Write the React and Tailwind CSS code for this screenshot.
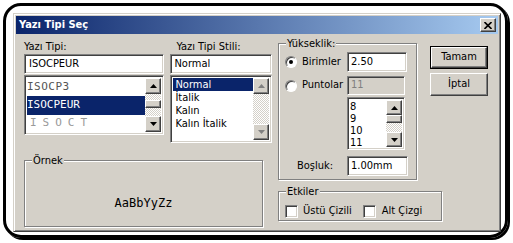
// Classic Windows "Yazı Tipi Seç" dialog

const sunken =
	'border border-t-[#808080] border-l-[#808080] border-b-white border-r-white shadow-[inset_1px_1px_0_#404040,inset_-1px_-1px_0_#d4d0c8]';
const raised =
	'border border-t-white border-l-white border-b-[#404040] border-r-[#404040] shadow-[inset_-1px_-1px_0_#808080]';
const checker =
	'bg-[repeating-conic-gradient(#d4d0c8_0_25%,#ffffff_0_50%)] bg-[length:2px_2px]';

const Arrow = ({ up, disabled }) => (
	<svg width="7" height="4" viewBox="0 0 7 4">
		<path
			d={up ? 'M3.5 0 L7 4 L0 4 Z' : 'M0 0 L7 0 L3.5 4 Z'}
			fill={disabled ? '#808080' : '#000'}
		/>
	</svg>
);

const ScrollButton = ({ up, disabled, h = 16 }) => (
	<div
		className={`w-[16px] bg-[#d4d0c8] flex items-center justify-center ${raised}`}
		style={{ height: h }}
	>
		<Arrow up={up} disabled={disabled} />
	</div>
);

const ScrollBar = ({ thumbTop = 0, disabled, btn = 16 }) => (
	<div className="w-[16px] h-full flex flex-col shrink-0">
		<ScrollButton up disabled={disabled} h={btn} />
		<div className={`flex-1 flex flex-col ${checker}`}>
			{!disabled && (
				<>
					<div style={{ height: thumbTop }} />
					<div className={`h-[8px] w-[16px] bg-[#d4d0c8] ${raised}`} />
				</>
			)}
		</div>
		<ScrollButton disabled={disabled} h={btn} />
	</div>
);

const Group = ({ label, className, children }) => (
	<div
		className={`relative border border-[#808080] shadow-[inset_1px_1px_0_#fff,1px_1px_0_#fff] ${className}`}
	>
		<span className="absolute -top-[7px] left-[7px] px-[1px] bg-[#d4d0c8] leading-[13px]">
			{label}
		</span>
		{children}
	</div>
);

const Radio = ({ checked }) => (
	<div
		className={`w-[12px] h-[12px] rounded-full bg-white flex items-center justify-center border border-t-[#808080] border-l-[#808080] border-b-white border-r-white shadow-[inset_1px_1px_0_#404040]`}
	>
		{checked && <div className="w-[4px] h-[4px] rounded-full bg-black" />}
	</div>
);

const Checkbox = () => <div className={`w-[13px] h-[13px] bg-white ${sunken}`} />;

const Input = ({ value, className, disabled }) => (
	<div
		className={`${sunken} ${disabled ? 'bg-[#d4d0c8] text-[#808080]' : 'bg-white'} flex items-center pl-[3px] ${className}`}
	>
		{value}
	</div>
);

export default function App() {
	return (
		<div className="w-[513px] h-[243px] bg-white overflow-hidden font-['DejaVu_Sans_Condensed','DejaVu_Sans',sans-serif] text-[11px] text-black">
			<div className="ml-[3px] mt-[3px] w-[505px] h-[235px] border-[3px] border-black rounded-[18px] shadow-[2px_2px_0_#000] pt-[7px] pl-[7px]">
				{/* window */}
				<div className="w-[488px] h-[219px] bg-[#d4d0c8] border border-t-[#d4d0c8] border-l-[#d4d0c8] border-b-[#404040] border-r-[#404040] shadow-[inset_1px_1px_0_#fff,inset_-1px_-1px_0_#808080] p-[2px]">
					{/* title bar */}
					<div className="h-[18px] flex items-center justify-between pl-[3px] pr-[2px] bg-[linear-gradient(to_right,#0a246a,#a6caf0)]">
						<span className="font-bold text-white">Yazı Tipi Seç</span>
						<div className={`w-[16px] h-[14px] bg-[#d4d0c8] flex items-center justify-center ${raised}`}>
							<svg width="8" height="7" viewBox="0 0 8 7">
								<path d="M0.5 0 L7.5 7 M7.5 0 L0.5 7" stroke="#000" strokeWidth="1.6" />
							</svg>
						</div>
					</div>

					{/* body */}
					<div className="flex pl-[8px] pt-[6px]">
						{/* left section */}
						<div className="w-[248px] flex flex-col">
							<div className="flex gap-[6px]">
								{/* font */}
								<div className="w-[141px] flex flex-col">
									<div className="h-[14px] leading-[14px]">Yazı Tipi:</div>
									<Input value="ISOCPEUR" className="h-[20px] pl-[4px]" />
									<div className={`mt-[1px] h-[60px] bg-white flex p-[2px] ${sunken}`}>
										<div className="flex-1 flex flex-col font-['DejaVu_Sans_Mono',monospace]">
											<div className="h-[19px] flex items-center text-[#555] font-light text-[11px] tracking-[0.5px]">
												ISOCP3
											</div>
											<div className="h-[19px] flex items-center bg-[#0a246a] text-white text-[11px]">
												ISOCPEUR
											</div>
											<div className="h-[18px] flex items-center pl-[3px] text-[#999] font-light text-[11px] tracking-[6px]">
												ISOCT
											</div>
										</div>
										<ScrollBar thumbTop={6} />
									</div>
								</div>

								{/* style */}
								<div className="w-[102px] flex flex-col">
									<div className="h-[14px] leading-[14px] pl-[6px]">Yazı Tipi Stili:</div>
									<Input value="Normal" className="h-[20px]" />
									<div className={`mt-[1px] h-[68px] bg-white flex p-[2px] ${sunken}`}>
										<div className="flex-1 flex flex-col">
											<div className="h-[13px] leading-[13px] pl-[2px] bg-[#0a246a] text-white">Normal</div>
											<div className="h-[13px] leading-[13px] pl-[2px]">İtalik</div>
											<div className="h-[13px] leading-[13px] pl-[2px]">Kalın</div>
											<div className="h-[13px] leading-[13px] pl-[2px]">Kalın İtalik</div>
										</div>
										<ScrollBar disabled />
									</div>
								</div>
							</div>

							<Group label="Örnek" className="mt-[17px] w-[239px] h-[67px]">
								<div className="flex justify-center pt-[36px] font-['DejaVu_Sans_Mono',monospace] text-[12px] leading-[13px]">
									AaBbYyZz
								</div>
							</Group>
						</div>

						{/* right section */}
						<div className="ml-[6px] flex flex-col">
							<div className="flex">
								<Group label="Yükseklik:" className="mt-[3px] w-[139px] h-[137px] pt-[8px]">
									<div className="flex items-center">
										<div className="w-[68px] pl-[6px] flex items-center gap-[5px]">
											<Radio checked />
											<span>Birimler</span>
										</div>
										<Input value="2.50" className="w-[60px] h-[20px]" />
									</div>
									<div className="flex items-center mt-[4px]">
										<div className="w-[68px] pl-[6px] flex items-center gap-[5px]">
											<Radio />
											<span>Puntolar</span>
										</div>
										<Input value="11" disabled className="w-[58px] h-[19px]" />
									</div>
									<div className="flex mt-[2px]">
										<div className="w-[68px]" />
										<div className={`w-[58px] h-[53px] bg-white flex p-[2px] ${sunken}`}>
											<div className="flex-1 flex flex-col">
												<div className="h-[12px] leading-[12px] pt-[1px]">8</div>
												<div className="h-[12px] leading-[12px] pt-[1px]">9</div>
												<div className="h-[12px] leading-[12px] pt-[1px]">10</div>
												<div className="h-[12px] leading-[12px] pt-[1px]">11</div>
											</div>
											<ScrollBar thumbTop={0} btn={15} />
										</div>
									</div>
									<div className="flex items-center mt-[6px]">
										<div className="w-[68px] pl-[18px]">Boşluk:</div>
										<Input value="1.00mm" className="w-[61px] h-[20px]" />
									</div>
								</Group>

								<div className="ml-[13px] mt-[6px] w-[58px] flex flex-col gap-[4px]">
									<div className="h-[23px] border border-black">
										<div className={`h-full bg-[#d4d0c8] flex items-center justify-center ${raised}`}>
											Tamam
										</div>
									</div>
									<div className={`h-[23px] bg-[#d4d0c8] flex items-center justify-center ${raised}`}>
										İptal
									</div>
								</div>
							</div>

							<Group label="Etkiler" className="mt-[11px] w-[164px] h-[30px] pt-[11px]">
								<div className="flex items-center pl-[6px]">
									<Checkbox />
									<span className="ml-[5px]">Üstü Çizili</span>
									<div className="ml-[11px]">
										<Checkbox />
									</div>
									<span className="ml-[6px]">Alt Çizgi</span>
								</div>
							</Group>
						</div>
					</div>
				</div>
			</div>
		</div>
	);
}
